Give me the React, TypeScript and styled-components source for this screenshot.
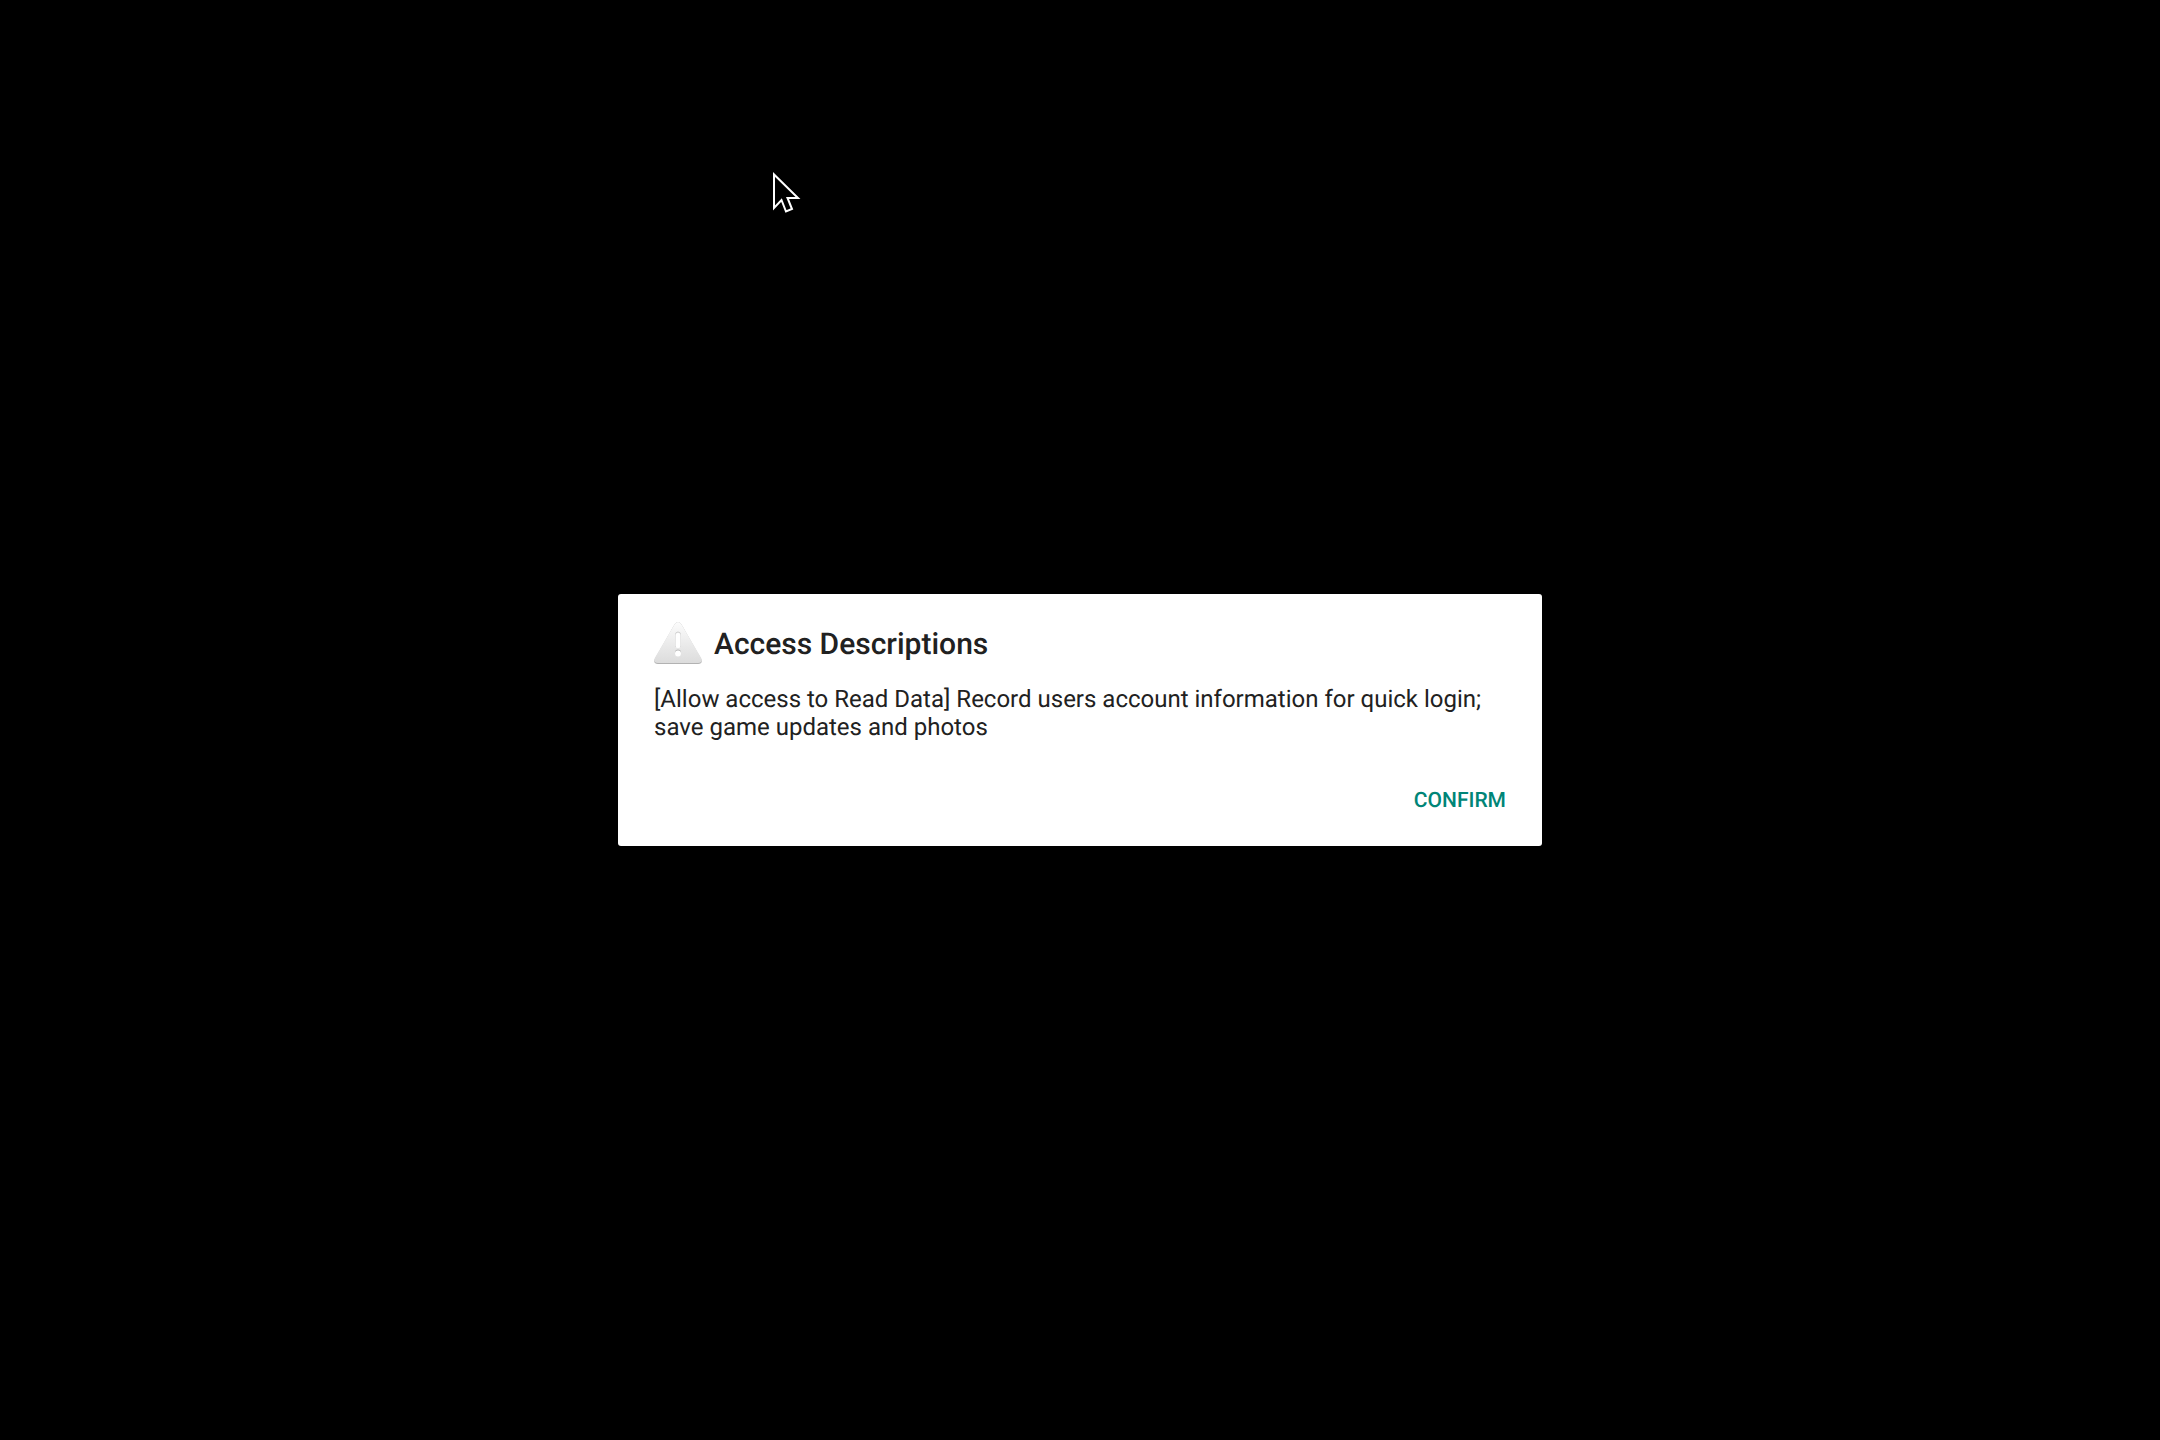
import React from "react";
import styled, { createGlobalStyle } from "styled-components";

const GlobalStyle = createGlobalStyle`
  *, *::before, *::after { box-sizing: border-box; }
  body {
    margin: 0;
    background: #000;
    font-family: Roboto, "Noto Sans", sans-serif;
    color: #212121;
    text-rendering: geometricPrecision;
    -webkit-font-smoothing: antialiased;
  }
`;

const Screen = styled.main`
  position: relative;
  display: grid;
  place-items: center;
  min-height: 100vh;
  overflow: hidden;
`;

const Dialog = styled.section`
  display: flex;
  flex-direction: column;
  width: min(924px, 100% - 48px);
  padding-top: 27px;
  background: #fff;
  border-radius: 3px;
`;

const TitleRow = styled.header`
  display: flex;
  align-items: center;
  gap: 12px;
  padding: 0 36px;
`;

const WarningIcon = styled.svg`
  flex: none;
  width: 48px;
  height: 48px;
`;

const Title = styled.h1`
  margin: 0;
  font-size: 30px;
  line-height: 36px;
  font-weight: 500;
`;

const Message = styled.p`
  margin: 0;
  padding: 16px 36px 24px;
  font-size: 24px;
  line-height: 28px;
`;

const Actions = styled.footer`
  display: flex;
  justify-content: flex-end;
  padding: 0 24px 9px;
`;

const ActionButton = styled.button`
  height: 72px;
  padding: 0 12px;
  border: 0;
  background: transparent;
  color: #008577;
  font-family: inherit;
  font-size: 21px;
  line-height: 24px;
  font-weight: 500;
  text-rendering: inherit;
  text-transform: uppercase;
  cursor: pointer;
`;

const Pointer = styled.svg`
  position: absolute;
  left: 772px;
  top: 170px;
  width: 30px;
  height: 46px;
  pointer-events: none;
`;

export default function App() {
  return (
    <Screen>
      <GlobalStyle />
      <Dialog role="alertdialog" aria-labelledby="dialog-title" aria-describedby="dialog-message">
        <TitleRow>
          <WarningIcon viewBox="0 0 48 48" aria-hidden="true">
            <defs>
              <linearGradient id="warning-fill" x1="0" y1="0" x2="0" y2="1">
                <stop offset="0" stopColor="#fcfcfc" />
                <stop offset="1" stopColor="#dcdcdc" />
              </linearGradient>
            </defs>
            <path d="M20.6 3.2Q24 -1.2 27.4 3.2L47.2 38Q49 43 44 43H4Q-1 43 .8 38Z" fill="#b2b2b2" />
            <path d="M20.6 3.2Q24 -1.2 27.4 3.2L47.2 37Q49 42 44 42H4Q-1 42 .8 37Z" fill="url(#warning-fill)" />
            <path d="M21.5 26V13.500a2.500 2.500 0 0 1 5 0V26" fill="none" stroke="#cfcfcf" />
            <rect x="21.5" y="12" width="5" height="15" rx="2.5" fill="#fff" />
            <circle cx="24" cy="31.5" r="3" fill="#b8b8b8" />
            <circle cx="24" cy="32.5" r="3" fill="#fff" />
          </WarningIcon>
          <Title id="dialog-title">Access Descriptions</Title>
        </TitleRow>
        <Message id="dialog-message">
          [Allow access to Read Data] Record users account information for quick login; save game updates and photos
        </Message>
        <Actions>
          <ActionButton type="button">Confirm</ActionButton>
        </Actions>
      </Dialog>
      <Pointer viewBox="0 0 30 46" aria-hidden="true">
        <path
          d="M2 4.500V38L9.500 30L14 41.500L20 39L15.500 28H26Z"
          fill="#000"
          stroke="#fff"
          strokeWidth="2"
        />
      </Pointer>
    </Screen>
  );
}
